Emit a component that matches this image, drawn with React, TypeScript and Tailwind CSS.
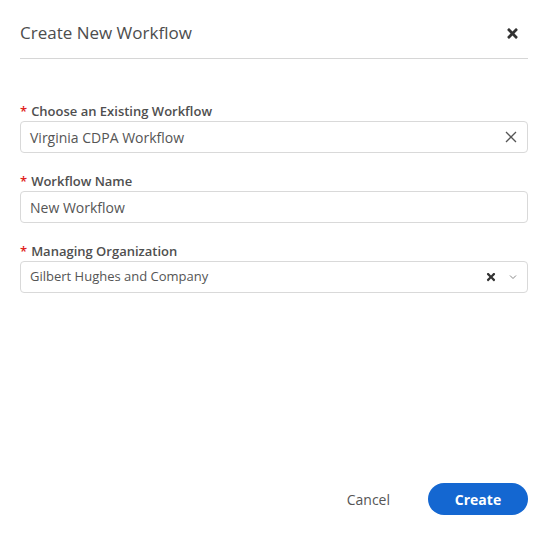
import React from 'react';
import { FaTimes } from 'react-icons/fa';

function Label({ children }: { children: React.ReactNode }) {
  return (
    <label className="block text-[13px] leading-[18px] font-semibold text-[#4f4f4f] mb-[1px]">
      <span className="text-[#e0201b] mr-[4px]">*</span>
      {children}
    </label>
  );
}

export default function App() {
  return (
    <div
      className="w-[548px] h-[535px] bg-white flex flex-col px-[20px]"
      style={{ fontFamily: '"Open Sans", sans-serif' }}
    >
      {/* Header */}
      <div className="flex items-center justify-between h-[59px] pt-[7px] border-b border-[#d6d6d6]">
        <h2 className="text-[17px] font-normal text-[#4d4d4d]">Create New Workflow</h2>
        <FaTimes className="w-[15px] h-[15px] text-[#333] mr-[8px] mt-[2px]" />
      </div>

      {/* Fields */}
      <div className="pt-[43px] flex flex-col gap-[19px]">
        <div>
          <Label>Choose an Existing Workflow</Label>
          <div className="h-[32px] flex items-center justify-between border border-[#d9d9d9] rounded-[4px] pl-[9px] pr-[10px]">
            <span className="text-[14px] text-[#555]">Virginia CDPA Workflow</span>
            <svg width="12" height="12" viewBox="0 0 12 12" className="text-[#555]">
              <path d="M1 1 L11 11 M11 1 L1 11" stroke="currentColor" strokeWidth="1.3" />
            </svg>
          </div>
        </div>
        <div>
          <Label>Workflow Name</Label>
          <div className="h-[32px] flex items-center border border-[#d9d9d9] rounded-[4px] pl-[9px]">
            <span className="text-[14px] text-[#555]">New Workflow</span>
          </div>
        </div>
        <div>
          <Label>Managing Organization</Label>
          <div className="h-[32px] flex items-center justify-between border border-[#d9d9d9] rounded-[4px] pl-[9px] pr-[10px]">
            <span className="text-[13px] text-[#555]">Gilbert Hughes and Company</span>
            <div className="flex items-center gap-[12px]">
              <FaTimes className="w-[12px] h-[12px] text-[#333]" />
              <svg width="8" height="6" viewBox="0 0 8 6" className="text-[#888]">
                <path d="M1 1.5 L4 4.5 L7 1.5" fill="none" stroke="currentColor" strokeWidth="1" />
              </svg>
            </div>
          </div>
        </div>
      </div>

      {/* Footer */}
      <div className="mt-auto mb-[20px] flex items-center justify-end gap-[38px]">
        <button className="text-[14px] text-[#555]">Cancel</button>
        <button className="h-[32px] w-[100px] rounded-full bg-[#1467d1] text-white text-[14px] font-bold">
          Create
        </button>
      </div>
    </div>
  );
}
